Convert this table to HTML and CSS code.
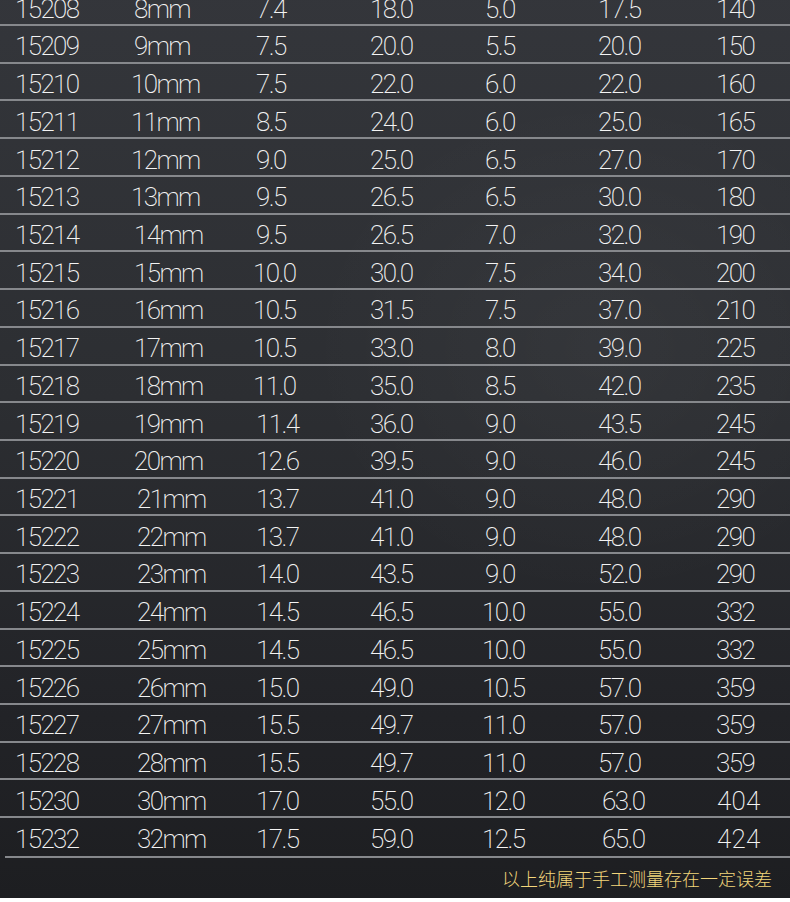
FILE: index.html
```html
<!DOCTYPE html>
<html lang="zh">
<head>
<meta charset="utf-8">
<title>尺寸表</title>
<link rel="stylesheet" href="styles.css">
</head>
<body>
<div class="sheet">
  <div class="table">
    <div class="row"><span>15208</span><span class="size">8mm</span><span>7.4</span><span>18.0</span><span>5.0</span><span>17.5</span><span>140</span></div>
    <div class="row"><span>15209</span><span class="size">9mm</span><span>7.5</span><span>20.0</span><span>5.5</span><span>20.0</span><span>150</span></div>
    <div class="row"><span>15210</span><span class="size narrow">10mm</span><span>7.5</span><span>22.0</span><span>6.0</span><span>22.0</span><span>160</span></div>
    <div class="row"><span>15211</span><span class="size narrow">11mm</span><span>8.5</span><span>24.0</span><span>6.0</span><span>25.0</span><span>165</span></div>
    <div class="row"><span>15212</span><span class="size narrow">12mm</span><span>9.0</span><span>25.0</span><span>6.5</span><span>27.0</span><span>170</span></div>
    <div class="row"><span>15213</span><span class="size narrow">13mm</span><span>9.5</span><span>26.5</span><span>6.5</span><span>30.0</span><span>180</span></div>
    <div class="row"><span>15214</span><span class="size">14mm</span><span>9.5</span><span>26.5</span><span>7.0</span><span>32.0</span><span>190</span></div>
    <div class="row"><span>15215</span><span class="size">15mm</span><span class="wide">10.0</span><span>30.0</span><span>7.5</span><span>34.0</span><span>200</span></div>
    <div class="row"><span>15216</span><span class="size">16mm</span><span class="wide">10.5</span><span>31.5</span><span>7.5</span><span>37.0</span><span>210</span></div>
    <div class="row"><span>15217</span><span class="size">17mm</span><span class="wide">10.5</span><span>33.0</span><span>8.0</span><span>39.0</span><span>225</span></div>
    <div class="row"><span>15218</span><span class="size">18mm</span><span class="wide">11.0</span><span>35.0</span><span>8.5</span><span>42.0</span><span>235</span></div>
    <div class="row"><span>15219</span><span class="size">19mm</span><span>11.4</span><span>36.0</span><span>9.0</span><span>43.5</span><span>245</span></div>
    <div class="row"><span>15220</span><span class="size">20mm</span><span>12.6</span><span>39.5</span><span>9.0</span><span>46.0</span><span>245</span></div>
    <div class="row"><span>15221</span><span class="size late">21mm</span><span>13.7</span><span>41.0</span><span>9.0</span><span>48.0</span><span>290</span></div>
    <div class="row"><span>15222</span><span class="size late">22mm</span><span>13.7</span><span>41.0</span><span>9.0</span><span>48.0</span><span>290</span></div>
    <div class="row"><span>15223</span><span class="size late">23mm</span><span>14.0</span><span>43.5</span><span>9.0</span><span>52.0</span><span>290</span></div>
    <div class="row"><span>15224</span><span class="size late">24mm</span><span>14.5</span><span>46.5</span><span class="wide">10.0</span><span>55.0</span><span>332</span></div>
    <div class="row"><span>15225</span><span class="size late">25mm</span><span>14.5</span><span>46.5</span><span class="wide">10.0</span><span>55.0</span><span>332</span></div>
    <div class="row"><span>15226</span><span class="size late">26mm</span><span>15.0</span><span>49.0</span><span class="wide">10.5</span><span>57.0</span><span>359</span></div>
    <div class="row"><span>15227</span><span class="size late">27mm</span><span>15.5</span><span>49.7</span><span class="wide">11.0</span><span>57.0</span><span>359</span></div>
    <div class="row"><span>15228</span><span class="size late">28mm</span><span>15.5</span><span>49.7</span><span class="wide">11.0</span><span>57.0</span><span>359</span></div>
    <div class="row"><span>15230</span><span class="size late">30mm</span><span>17.0</span><span>55.0</span><span class="wide">12.0</span><span class="late6">63.0</span><span class="spaced">404</span></div>
    <div class="row last"><span>15232</span><span class="size late">32mm</span><span>17.5</span><span>59.0</span><span class="wide">12.5</span><span class="late6">65.0</span><span class="spaced">424</span></div>
  </div>
  <div class="note">以上纯属于手工测量存在一定误差</div>
</div>
</body>
</html>
```

FILE: styles.css
```css
html, body {
  margin: 0;
  padding: 0;
  background: #ffffff;
}

body {
  width: 790px;
  height: 902px;
  overflow: hidden;
}

.sheet {
  height: 898px;
  margin-top: -11.7px;
  padding-top: 11.7px;
  box-sizing: content-box;
  background:
    radial-gradient(ellipse 420px 360px at 600px 360px, rgba(255,255,255,0.035), rgba(255,255,255,0) 70%),
    linear-gradient(180deg, #34363b 0%, #2c2e32 45%, #222327 80%, #1d1e21 100%);
  color: #f4f4f4;
  font-family: Roboto, "Open Sans", sans-serif;
  font-weight: 200;
}

.table {
  margin-top: -11.7px;
}

.row {
  display: grid;
  grid-template-columns: 118px 123px 114px 115px 113px 118px 1fr;
  padding-left: 15px;
  height: 37.73px;
  box-sizing: border-box;
  border-bottom: 2px solid #86888c;
  align-items: center;
  font-size: 26px;
  letter-spacing: -1.6px;
  line-height: 1;
  padding-top: 5px;
}

.row.last {
  border-bottom: none;
}

.size {
  padding-left: 1px;
}

.size.narrow {
  margin-left: -3px;
}

.size.late {
  padding-left: 4px;
}

.wide {
  margin-left: -3px;
}

.late6 {
  padding-left: 4px;
}

.spaced {
  letter-spacing: 0.2px;
  padding-left: 1px;
}

.note {
  margin-left: 5px;
  border-top: 2px solid #86888c;
  height: 41px;
  box-sizing: border-box;
  display: flex;
  align-items: center;
  justify-content: flex-end;
  padding-right: 18px;
  padding-top: 2px;
  font-family: "Noto Sans CJK SC", sans-serif;
  font-weight: 300;
  font-size: 18px;
  color: #f3d67c;
}
```
